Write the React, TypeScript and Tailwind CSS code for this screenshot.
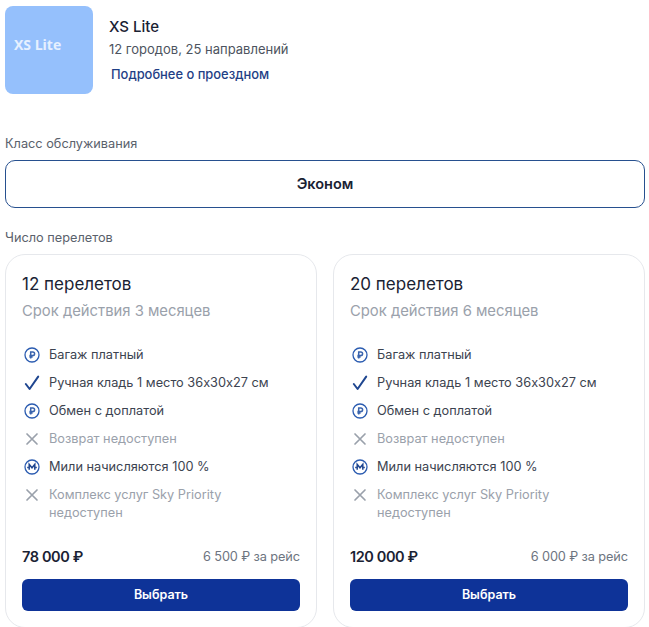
// Тариф XS Lite: выбор класса и числа перелётов.

type Perk = { kind: "rub" | "check" | "cross" | "miles"; text: string };

const perks: Perk[] = [
  { kind: "rub", text: "Багаж платный" },
  { kind: "check", text: "Ручная кладь 1 место 36х30х27 см" },
  { kind: "rub", text: "Обмен с доплатой" },
  { kind: "cross", text: "Возврат недоступен" },
  { kind: "miles", text: "Мили начисляются 100 %" },
  { kind: "cross", text: "Комплекс услуг Sky Priority недоступен" },
];

const plans = [
  { title: "12 перелетов", term: "Срок действия 3 месяцев", price: "78 000 ₽", perFlight: "6 500 ₽ за рейс" },
  { title: "20 перелетов", term: "Срок действия 6 месяцев", price: "120 000 ₽", perFlight: "6 000 ₽ за рейс" },
];

function PerkIcon({ kind }: { kind: Perk["kind"] }) {
  if (kind === "check") {
    return (
      <svg width="16" height="16" viewBox="0 0 16 16" fill="none" className="shrink-0">
        <path d="M1.8 9 L5.6 14 L14.2 1.6" stroke="#1f4690" strokeWidth="2" strokeLinecap="round" strokeLinejoin="round" />
      </svg>
    );
  }
  if (kind === "cross") {
    return (
      <svg width="16" height="16" viewBox="0 0 16 16" fill="none" className="shrink-0">
        <path d="M3 3 L13 13 M13 3 L3 13" stroke="#9aa1ab" strokeWidth="1.7" strokeLinecap="round" />
      </svg>
    );
  }
  return (
    <svg width="16" height="16" viewBox="0 0 16 16" fill="none" className="shrink-0">
      <circle cx="8" cy="8" r="7" stroke="#2a5bb0" strokeWidth="1.3" />
      {kind === "rub" ? (
        <path
          d="M6.7 11.6 V4.9 H8.8 A1.8 1.8 0 0 1 8.8 8.5 H5.4 M5.4 10 H8.6"
          stroke="#3a64ad"
          strokeWidth="1.5"
        />
      ) : (
        <path
          d="M5.2 10.8 V5.4 L8 8.8 L10.8 5.4 V10.8 M3.2 8.4 H4.4 M11.6 8.4 H12.8"
          stroke="#1f4690"
          strokeWidth="1.5"
        />
      )}
    </svg>
  );
}

function PlanCard({ plan }: { plan: (typeof plans)[number] }) {
  return (
    <div className="flex h-[374px] flex-col rounded-[20px] border border-[#e6e8ec] bg-white px-4 pt-[18px]">
      <div className="text-[17px] leading-[22px] text-[#1a2233]">{plan.title}</div>
      <div className="mt-[5px] text-[14.8px] leading-[22px] text-[#9aa1ab]">{plan.term}</div>
      <ul className="mt-[23px] flex flex-col gap-2">
        {perks.map((perk) => (
          <li key={perk.text} className="flex items-start gap-[9px]">
            <span className="ml-0.5 flex h-5 items-center">
              <PerkIcon kind={perk.kind} />
            </span>
            <span
              className={
                perk.kind === "cross"
                  ? "mt-px max-w-[200px] text-[12.75px] leading-[18px] text-[#9aa1ab]"
                  : "mt-px text-[12.75px] leading-[18px] text-[#3c4350]"
              }
            >
              {perk.text}
            </span>
          </li>
        ))}
      </ul>
      <div className="mt-6 flex items-center justify-between">
        <span className="text-[14.5px] font-semibold leading-[22px] tracking-[-0.4px] text-[#1a2233]">{plan.price}</span>
        <span className="text-[12.75px] leading-[22px] tracking-[-0.1px] text-[#6d7480]">{plan.perFlight}</span>
      </div>
      <button type="button" className="mt-[11px] h-8 rounded-md bg-[#0e3398] text-[12.5px] font-semibold text-white">
        Выбрать
      </button>
    </div>
  );
}

export default function App() {
  return (
    <div className="h-[627px] overflow-hidden bg-white pl-[5px] pr-1 pt-[6px] font-['Inter',sans-serif]">
      <div className="flex gap-4">
        <div className="flex h-[88px] w-[88px] items-center rounded-lg bg-[#95c0fc] pb-3 pl-[9px]">
          <span className="font-['Open_Sans',sans-serif] text-[14px] font-bold text-[#e6f0ff]">XS Lite</span>
        </div>
        <div className="pt-[11px]">
          <div className="text-[15px] font-medium leading-5 text-[#1a2233]">XS Lite</div>
          <div className="mt-[2px] text-[13px] leading-5 text-[#4d5460]">12 городов, 25 направлений</div>
          <div className="ml-[2px] mt-[6px] text-[12.9px] font-medium leading-5 text-[#1f3f86]">
            Подробнее о проездном
          </div>
        </div>
      </div>

      <div className="mt-[41px] text-[12.75px] leading-[18px] text-[#5a616c]">Класс обслуживания</div>
      <div className="mt-[7px] flex h-[48px] items-center justify-center rounded-[10px] border border-[#27508f] text-[14.5px] font-semibold text-[#1a2233]">
        Эконом
      </div>

      <div className="mt-[21px] text-[12.75px] leading-[18px] text-[#5a616c]">Число перелетов</div>
      <div className="mt-[7px] grid grid-cols-2 gap-4">
        {plans.map((plan) => (
          <PlanCard key={plan.title} plan={plan} />
        ))}
      </div>
    </div>
  );
}
